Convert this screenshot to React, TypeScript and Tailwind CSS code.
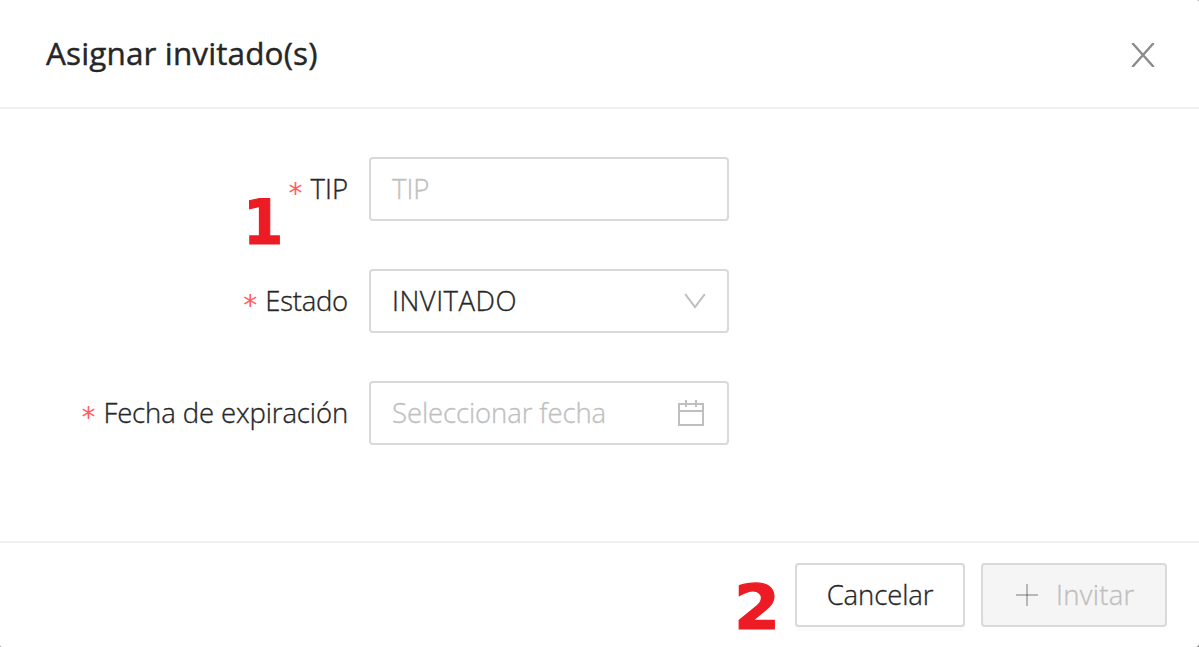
import type { ReactNode } from "react";

function Field({ label, labelClass, children }: { label: string; labelClass: string; children: ReactNode }) {
  return (
    <div className="flex h-16 items-center">
      <label className="flex w-[348px] shrink-0 items-center justify-end whitespace-nowrap">
        <span className="mr-2 h-8 w-3.5 font-['DejaVu_Sans'] text-[28px] leading-[41px] font-normal text-[#ff5f61] [-webkit-text-stroke:0px]">*</span>
        <span className={labelClass}>{label}</span>
      </label>
      <div className="ml-[21px] flex h-16 w-[360px] items-center justify-between rounded-[4px] border-2 border-[#d9d9d9] bg-white pl-[21px] whitespace-nowrap">
        {children}
      </div>
    </div>
  );
}

export default function App() {
  return (
    <div className="h-[647px] w-[1199px] bg-[#858585]">
      <div className="relative flex h-[647px] w-[1199px] flex-col overflow-hidden rounded-tr-[2px] rounded-br-[4px] rounded-bl-[2px] bg-white font-['Open_Sans','Noto_Sans',sans-serif] text-[27.5px] font-light text-[#262626] [-webkit-text-stroke:0.35px]">
        <header className="flex h-[109px] items-center justify-between border-b-2 border-[#f0f0f0] pr-[44px] pl-[46px]">
          <h1 className="mb-0.5 text-[31.5px] leading-[44px] font-normal tracking-[0.12px] whitespace-nowrap [-webkit-text-stroke:0.4px]">Asignar invitado(s)</h1>
          <svg className="mt-[3px] h-6 w-6" viewBox="0 0 24 24" fill="none" stroke="#8c8c8c" strokeWidth="2.4">
            <path d="M1.3 0 22.7 24M22.7 0 1.3 24" />
          </svg>
        </header>
        <main className="flex h-[432px] flex-col gap-12 pt-12">
          <Field label="TIP" labelClass="">
            <span className="text-[#bfbfbf]">TIP</span>
          </Field>
          <Field label="Estado" labelClass="tracking-[-0.25px]">
            <span className="tracking-[0.5px]">INVITADO</span>
            <svg className="mr-[20px] h-4 w-6" viewBox="0 0 24 16" fill="none" stroke="#bfbfbf" strokeWidth="2">
              <path d="M2.2 1.2 12 14 21.8 1.2" />
            </svg>
          </Field>
          <Field label="Fecha de expiración" labelClass="tracking-[-0.12px]">
            <span className="tracking-[-0.1px] text-[#bfbfbf]">Seleccionar fecha</span>
            <svg className="mr-[22px] h-7 w-7" viewBox="0 0 28 28" fill="none" stroke="#bfbfbf" strokeWidth="2">
              <path d="M2 5h24v21H2zM2 12h24M9 1v7M19 1v7" />
            </svg>
          </Field>
        </main>
        <footer className="flex h-[106px] justify-end gap-4 border-t-2 border-[#f0f0f0] pt-5 pr-8 whitespace-nowrap">
          <button className="flex h-16 w-[170px] items-center justify-center rounded-[4px] border-2 border-[#d9d9d9] bg-white shadow-[0_4px_0_rgba(0,0,0,0.016)]">
            <span className="tracking-[-0.1px]">Cancelar</span>
          </button>
          <button disabled className="flex h-16 w-[186px] items-center rounded-[4px] border-2 border-[#d9d9d9] bg-[#f5f5f5] pl-[33px] text-[#bfbfbf]">
            <svg className="mr-[18px] h-[22px] w-[22px]" viewBox="0 0 22 22" fill="none" stroke="#000" strokeOpacity="0.25" strokeWidth="2">
              <path d="M0 11h22" />
              <path d="M11 0v22" />
            </svg>
            <span className="tracking-[0.3px]">Invitar</span>
          </button>
        </footer>
        <span className="absolute top-[191px] left-[243px] origin-left scale-x-[0.92] font-['DejaVu_Sans'] text-[63px] leading-[64px] font-bold text-[#ed1c24] [-webkit-text-stroke:1.2px]">1</span>
        <span className="absolute top-[576px] left-[734px] origin-left scale-x-[1.05] font-['DejaVu_Sans'] text-[63px] leading-[64px] font-bold text-[#ed1c24] [-webkit-text-stroke:1.2px]">2</span>
      </div>
    </div>
  );
}
